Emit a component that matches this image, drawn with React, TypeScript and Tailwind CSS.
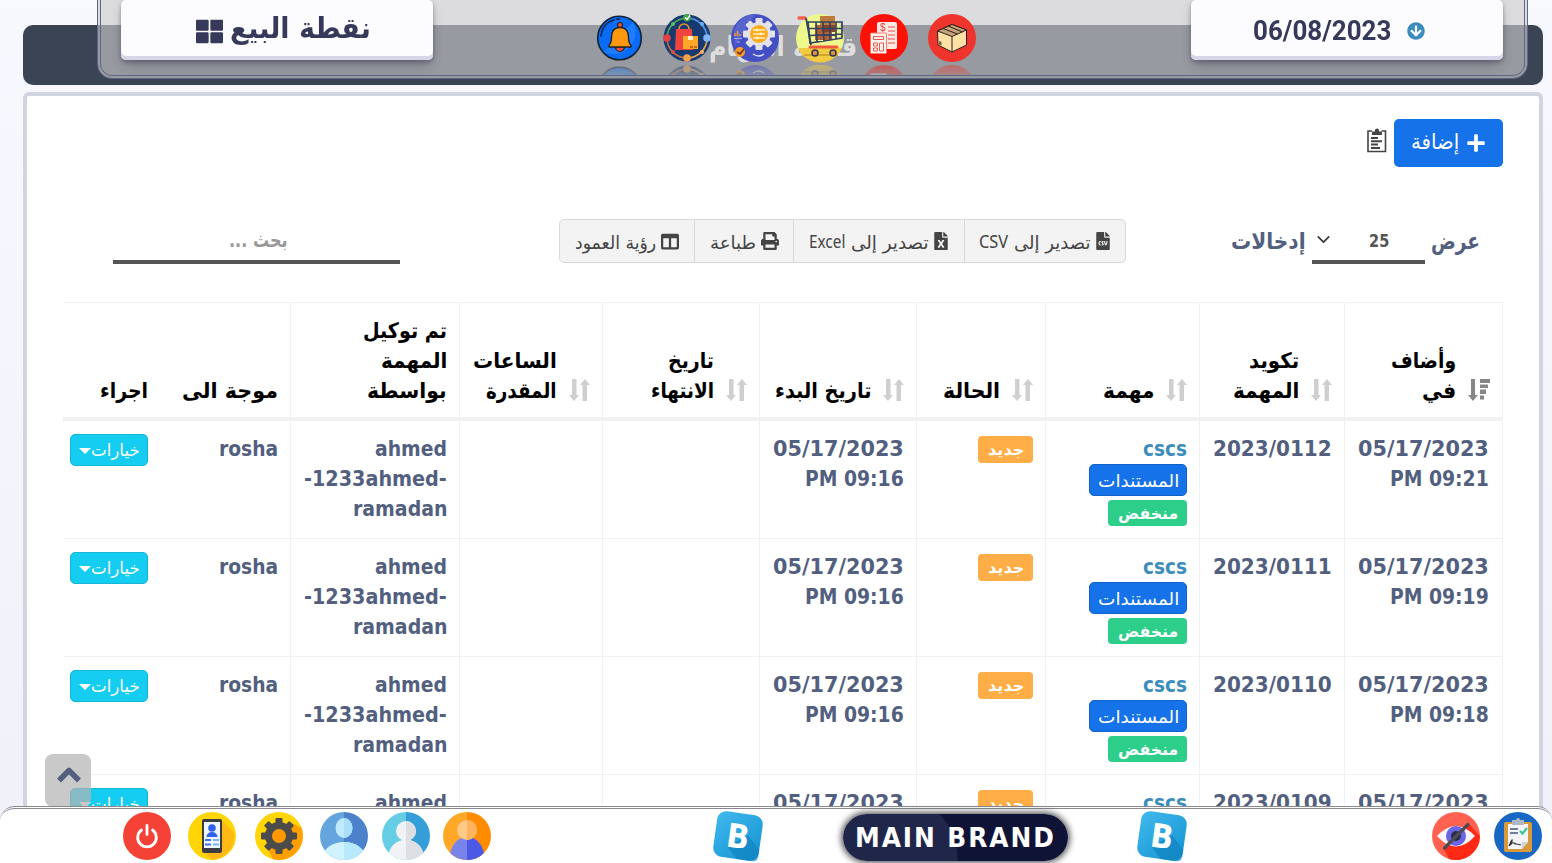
import { useLayoutEffect, useRef, useState, type ReactNode } from "react";
import { FaPlus, FaFileCsv, FaFileExcel, FaPrint, FaColumns, FaThLarge, FaArrowCircleDown } from "react-icons/fa";
import { ChevronDown } from "lucide-react";

/* A single line of text condensed or stretched to a fixed width. */
function Fit({ w, className = "", dir = "rtl", children }: { w: number; className?: string; dir?: "rtl" | "ltr"; children: ReactNode }) {
  const ref = useRef<HTMLSpanElement>(null);
  const [scale, setScale] = useState(1);
  useLayoutEffect(() => {
    if (ref.current) setScale(w / ref.current.offsetWidth);
  }, [w]);
  return (
    <span dir="ltr" className={`inline-flex shrink-0 whitespace-nowrap ${className}`} style={{ width: w }}>
      <span ref={ref} dir={dir} className="block shrink-0 origin-left" style={{ transform: `scaleX(${scale})` }}>
        {children}
      </span>
    </span>
  );
}

function Bell() {
  return (
    <svg viewBox="0 0 48 48" className="size-12">
      <circle cx="24.500" cy="24" r="21.800" fill="#0a6cf5" stroke="#123" strokeWidth="1.600" />
      <path d="M9 38L38 8a22 22 0 0 1-29 30z" fill="#1d7dff" />
      <path d="M6 22C7 13 12 8 19 5.800M22 5h2" stroke="#0b2c66" strokeWidth="1.800" fill="none" strokeLinecap="round" />
      <circle cx="25" cy="11" r="2.500" fill="#f04e45" stroke="#222" strokeWidth="1.200" />
      <path d="M20.500 33a4.500 4.500 0 0 0 9 0z" fill="#f04e45" stroke="#222" strokeWidth="1.200" />
      <path d="M25 13.500c-6 0-8.500 4-8.500 9.500 0 5-.5 6.500-2.500 8.500v1.500h22v-1.500c-2-2-2.500-3.500-2.500-8.500 0-5.500-2.500-9.500-8.500-9.500z" fill="#ff9811" stroke="#222" strokeWidth="1.400" strokeLinejoin="round" />
    </svg>
  );
}

function Shopping() {
  return (
    <svg viewBox="0 0 48 48" className="size-12">
      <circle cx="24" cy="24" r="23.500" fill="#173a70" />
      <g fill="none" strokeWidth="1.600">
        <path d="M10 10A20 20 0 0 1 24 4" stroke="#4caf50" />
        <path d="M24 4a20 20 0 0 1 20 20" stroke="#5b9bea" />
        <path d="M44 24a20 20 0 0 1-20 20" stroke="#f2a54a" />
        <path d="M24 44A20 20 0 0 1 4 24" stroke="#c66b3e" />
        <path d="M4 24a20 20 0 0 1 6-14" stroke="#4caf50" />
        <path d="M16 18v-3a5 5 0 0 1 10 0v3" stroke="#e8952f" />
      </g>
      <path d="M13 15h16l1 21H12z" fill="#f0443e" />
      <path d="M20 22h15v13H20z" fill="#ffa726" />
      <path d="M25 22h5v4h-5z" fill="#fff1c9" />
      <path d="M27 32h3v2h-3zM31 32h3v2h-3z" fill="#c4651d" />
      <circle cx="24" cy="3.800" r="3.800" fill="#43a847" />
      <path d="M22 3.500l2 2 3-4" fill="none" stroke="#fff" strokeWidth="1.400" />
      <circle cx="4" cy="24" r="3.800" fill="#e53f45" />
      <circle cx="44" cy="24" r="3.800" fill="#80b8f7" />
      <circle cx="24" cy="44" r="3.800" fill="#f5a14a" />
      <circle cx="10" cy="10" r="2" fill="#61b865" />
      <circle cx="39" cy="10" r="2" fill="#6eb0f3" />
      <circle cx="10" cy="38" r="2" fill="#e64a45" />
      <circle cx="39" cy="38" r="2" fill="#f6b36c" />
    </svg>
  );
}

function Gear({ cx, cy, r, fill, d }: { cx: number; cy: number; r: number; fill: string; d: number }) {
  return (
    <g fill={fill}>
      <circle cx={cx} cy={cy} r={r} />
      {[0, 45, 90, 135].map((a) => (
        <rect key={a} x={cx - d / 2} y={cy - r - 4} width={d} height={2 * r + 8} rx="1.200" transform={`rotate(${a} ${cx} ${cy})`} />
      ))}
    </g>
  );
}

function Automation() {
  return (
    <svg viewBox="0 0 48 48" className="size-12">
      <circle cx="24" cy="24" r="24" fill="#4450c4" />
      <path d="M3 17A24 24 0 0 1 24 0L4 32z" fill="#5963cd" />
      <Gear cx={28} cy={20} r={12} fill="#e2e3ea" d={7} />
      <circle cx="28" cy="20" r="9" fill="#ffab1f" />
      <path d="M22 16h12M22 20h12M22 24h12" stroke="#fff0bf" strokeWidth="1.300" />
      <circle cx="26" cy="16" r="1.400" fill="#fff0bf" />
      <circle cx="30" cy="20" r="1.400" fill="#fff0bf" />
      <circle cx="26" cy="24" r="1.400" fill="#fff0bf" />
      <path d="M4 22v-3M6.500 22v-5M9 22v-2" stroke="#f29b35" strokeWidth="1.600" />
      <path d="M3 24.500h8M6 28h3" stroke="#a4a8e4" />
      <circle cx="9" cy="38" r="5" fill="#fb9a24" />
      <path d="M6 38l3 2 4-5" stroke="#683622" strokeWidth="1.600" fill="none" />
      <path d="M22 40q6 4 11 0" stroke="#e4e5ff" strokeWidth="1.400" fill="none" />
    </svg>
  );
}

function Cart() {
  return (
    <svg viewBox="0 0 48 48" className="size-12 overflow-visible">
      <circle cx="24" cy="24" r="24" fill="#eef88d" />
      <path d="M2 34a24 24 0 0 0 44 0z" fill="#f2cb40" />
      <path d="M8 41h34" stroke="#d5a62c" strokeWidth="2" />
      <path d="M24 2h15v9H24z" fill="#bd7b3c" />
      <path d="M19 11h17v15H19z" fill="#b85f32" />
      <path d="M26 11h13v7H26z" fill="#8a4226" />
      <path d="M3 4h6" stroke="#f0604d" strokeWidth="3.400" strokeLinecap="round" />
      <path d="M10 4l5 27" stroke="#344363" strokeWidth="1.800" fill="none" />
      <path d="M12 8h34v16l-32 5zM13 14.500h33M14 21.500l32-1.500M20 8l1 20M27 8l1 19M34 8v18M40 8v17" stroke="#344363" strokeWidth="1.700" fill="none" />
      <path d="M14 33h27" stroke="#f0593f" strokeWidth="3" strokeLinecap="round" />
      <circle cx="19" cy="39" r="3" fill="#d89251" stroke="#303647" strokeWidth="1.500" />
      <circle cx="37" cy="39" r="3" fill="#d89251" stroke="#303647" strokeWidth="1.500" />
    </svg>
  );
}

function Invoice() {
  return (
    <svg viewBox="0 0 48 48" className="size-12">
      <circle cx="24" cy="24" r="24" fill="#fb1106" />
      <rect x="17" y="8" width="20" height="27" rx="2" fill="#ffe9e5" />
      <text x="20" y="17" fontSize="10" fontFamily="Liberation Sans" fill="#e13b30">$</text>
      <path d="M28 13h7M28 17h7M28 21h7M28 25h7M28 29h7" stroke="#e94f44" strokeWidth="1" />
      <rect x="10.500" y="19" width="16" height="20.500" rx="1" fill="#fff3f0" stroke="#f77b6e" />
      <path d="M13.500 22.500h10v3h-10zM13.500 29h4v3h-4zM13.500 34h4v3h-4zM19.500 29h4v8h-4z" fill="none" stroke="#e85b50" />
    </svg>
  );
}

function Parcel() {
  return (
    <svg viewBox="0 0 48 48" className="size-12">
      <circle cx="24" cy="24" r="24" fill="#ee342c" />
      <g stroke="#2b211c" strokeWidth="1" strokeLinejoin="round">
        <path d="M9.500 17L24 10.500 38.500 16v15L24 38 10 31z" fill="#ffe0a5" />
        <path d="M9.500 17L24 10.500 38.500 16 24 22.500z" fill="#c8a27a" />
        <path d="M24 22.500V38M15 14.500l14.500 5.500M20 12l14.500 6" fill="none" />
      </g>
      <path d="M11 27l2.500 1v3.500L11 30.500z" fill="#7f5b3a" />
    </svg>
  );
}

function Power() {
  return (
    <svg viewBox="0 0 48 48" className="size-12">
      <circle cx="24" cy="24" r="24" fill="#f44336" />
      <path d="M18.500 18a9.300 9.300 0 1 0 11 0M24 13.500v9" fill="none" stroke="#fff" strokeWidth="2.800" strokeLinecap="round" />
    </svg>
  );
}

function Phone() {
  return (
    <svg viewBox="0 0 48 48" className="size-12">
      <circle cx="24" cy="24" r="24" fill="#ffd505" />
      <path d="M33 7l13 14a24 24 0 0 1-22 27l-9-9z" fill="#ffb915" />
      <rect x="14" y="7" width="20" height="34" rx="2" fill="#3c3d42" />
      <path d="M16 10h16v26H16z" fill="#eef6ff" />
      <circle cx="24" cy="16" r="3.800" fill="#2f62ea" />
      <path d="M18.500 25a5.500 5 0 0 1 11 0z" fill="#2f62ea" />
      <path d="M17 28h6M17 32.500h6" stroke="#3d70ec" strokeWidth="2" />
      <path d="M25 28h6M25 32.500h6" stroke="#79b4f3" strokeWidth="2" />
    </svg>
  );
}

function Settings() {
  return (
    <svg viewBox="0 0 48 48" className="size-12">
      <circle cx="24" cy="24" r="24" fill="#ffd505" />
      <path d="M35 10l11.500 6A24 24 0 0 1 18 47.200L12 36z" fill="#ff9f00" />
      <Gear cx={24} cy={24} r={14} fill="#4b4b4b" d={7} />
      <circle cx="24" cy="24" r="7" fill="#ff9800" />
    </svg>
  );
}

function Person({ left, right, head, headR, body, bodyR, kind, id }: Record<"left" | "right" | "head" | "headR" | "body" | "bodyR" | "id", string> & { kind: number }) {
  const face = kind === 0 ? <ellipse cx="24" cy="16" rx="8.500" ry="10" /> : <circle cx="24" cy={kind === 1 ? 19 : 18} r="10" />;
  const torso =
    kind === 0 ? <ellipse cx="24" cy="47" rx="22" ry="17" /> : kind === 1 ? <path d="M20 24h8v4q14 4 14 20H6q0-16 14-20z" /> : <ellipse cx="24" cy="45" rx="17" ry="20" />;
  return (
    <svg viewBox="0 0 48 48" className="size-12">
      <defs>
        <clipPath id={id}><circle cx="24" cy="24" r="24" /></clipPath>
        <clipPath id={id + "h"}><path d="M24 0h24v48H24z" /></clipPath>
      </defs>
      <g clipPath={`url(#${id})`}>
        <path d="M0 0h24v48H0z" fill={left} />
        <path d="M24 0h24v48H24z" fill={right} />
        <g fill={body}>{torso}</g>
        <g fill={bodyR} clipPath={`url(#${id}h)`}>{torso}</g>
        <g fill={head}>{face}</g>
        <g fill={headR} clipPath={`url(#${id}h)`}>{face}</g>
      </g>
    </svg>
  );
}

function HiddenEye() {
  return (
    <svg viewBox="0 0 48 48" className="size-12">
      <circle cx="24" cy="24" r="24" fill="#ff6250" />
      <path d="M37 12l11 12a24 24 0 0 1-31 23l-5-10z" fill="#ff2a16" />
      <path d="M5 24q19-20 38 0-19 21-38 0z" fill="#f6f5fb" />
      <circle cx="24" cy="24" r="10" fill="#6965e7" />
      <circle cx="24" cy="24" r="5" fill="#292d4a" />
      <path d="M12.500 36L36 12.500" stroke="#4d4c55" strokeWidth="3.400" strokeLinecap="round" />
    </svg>
  );
}

function SignedForm() {
  return (
    <svg viewBox="0 0 48 48" className="size-12">
      <circle cx="24" cy="24" r="24" fill="#1967c4" />
      <rect x="10" y="10" width="28" height="30" rx="2" fill="#d89a3c" />
      <path d="M14 12h20v18l-6 7H14z" fill="#f5f5f7" />
      <path d="M34 30l-6 7v-7z" fill="#cfd2d8" />
      <path d="M18 8h4a2 2 0 0 1 4 0h4v5H18z" fill="#aeb8c6" />
      <path d="M16 17h8M16 21h8" stroke="#435579" strokeWidth="1.500" />
      <path d="M26 19l2.500 2.500L33 16" stroke="#36c99a" strokeWidth="2.200" fill="none" />
      <path d="M15 34q4-9 3-5t-2 4q3-3 4-2t2 1 5 1" stroke="#333" strokeWidth="1.200" fill="none" />
    </svg>
  );
}

function BrandTile() {
  return (
    <svg viewBox="0 0 52 52" className="size-[52px]">
      <defs>
        <linearGradient id="tile" x1="0" y1="0" x2="1" y2="1">
          <stop offset="0" stopColor="#40b9ee" />
          <stop offset="1" stopColor="#1492d0" />
        </linearGradient>
      </defs>
      <g transform="rotate(8 26 26)">
        <rect x="3" y="3" width="46" height="46" rx="9" fill="url(#tile)" />
        <path d="M36 24l13 13v6q0 6-6 6H28L17 38z" fill="#1185c0" opacity=".7" />
        <text x="26" y="38" textAnchor="middle" fontSize="33" fontWeight="700" fontFamily="DejaVu Sans Condensed, DejaVu Sans" fill="#fff">B</text>
      </g>
    </svg>
  );
}

function SortBoth() {
  return (
    <svg viewBox="0 0 21 22" className="h-[22px] w-[21px] shrink-0" fill="#cfcfcf">
      <path d="M3 0h4.500v16H10l-5 6-5-6h3zM13.500 22H18V6h3l-5-6-5 6h2.500z" />
    </svg>
  );
}

function SortDown() {
  return (
    <svg viewBox="0 0 22 22" className="h-[22px] w-[22px] shrink-0" fill="#868686">
      <path d="M3 0h4v16h3l-5 6-5-6h3zM12 0h10v4H12zM12 5.500h8V9h-8zM12 10.500h6V15h-6zM12 16.500h4v4h-4z" />
    </svg>
  );
}

function ClipboardLines() {
  return (
    <svg viewBox="0 0 20 25" className="h-[25px] w-5" fill="none" stroke="#444" strokeWidth="1.600">
      <path d="M5 3H1v20.500h17.500V3h-4" />
      <path d="M5 3.500h3a2 2 0 0 1 4 0h3V7H5z" fill="#444" stroke="none" />
      <circle cx="10" cy="2.500" r="2" fill="#444" stroke="none" />
      <path d="M4 10h7M4 13.300h11M4 16.500h7M4 20h9" strokeWidth="1.900" />
    </svg>
  );
}

const grid = "grid grid-cols-[159px_145px_154px_129px_157px_157px_143px_169px_130px_97px]";
const line = "h-[30px] items-center pt-[3px]";

const headings: { lines: [string, number][]; sort: "down" | "both" | "none" }[] = [
  { lines: [["وأضاف", 65], ["في", 34]], sort: "down" },
  { lines: [["تكويد", 50], ["المهمة", 66]], sort: "both" },
  { lines: [["مهمة", 51]], sort: "both" },
  { lines: [["الحالة", 57]], sort: "both" },
  { lines: [["تاريخ البدء", 96]], sort: "both" },
  { lines: [["تاريخ", 46], ["الانتهاء", 63]], sort: "both" },
  { lines: [["الساعات", 84], ["المقدرة", 71]], sort: "both" },
  { lines: [["تم توكيل", 84], ["المهمة", 66], ["بواسطة", 80]], sort: "none" },
  { lines: [["موجة الى", 96]], sort: "none" },
  { lines: [["اجراء", 48]], sort: "none" },
];

const rows = [
  { code: "2023/0112", added: "PM 09:21" },
  { code: "2023/0111", added: "PM 09:19" },
  { code: "2023/0110", added: "PM 09:18" },
  { code: "2023/0109", added: "PM 09:17" },
];

function Cell({ children, plain = false }: { children?: ReactNode; plain?: boolean }) {
  return <div className={`flex flex-col items-start pt-3 pr-3 ${plain ? "" : "border-l border-[#f1f1f3]"}`}>{children}</div>;
}

function Row({ code, added }: { code: string; added: string }) {
  return (
    <div className={`${grid} h-[118px] border-b border-[#f1f1f3] text-[21.5px] font-bold text-[#525f7f]`}>
      <div className="flex flex-col items-start border-x border-[#f1f1f3] pt-3 pr-[13px]">
        <Fit w={131} dir="ltr" className={line}>05/17/2023</Fit>
        <Fit w={99} dir="ltr" className={line}>{added}</Fit>
      </div>
      <Cell><Fit w={119} dir="ltr" className={line}>{code}</Fit></Cell>
      <Cell>
        <Fit w={44} dir="ltr" className={`${line} text-[#3c8dbc]`}>cscs</Fit>
        <div className="mt-px flex h-8 w-[98px] items-center justify-center rounded-[5px] border border-[#1262c8] bg-[#1572e8] pt-0.5 text-[17.5px] font-normal text-white">
          <Fit w={81}>المستندات</Fit>
        </div>
        <div className="mt-1 flex h-[26px] w-[79px] items-center justify-center rounded bg-[#2dce89] pt-px text-base text-white">
          <Fit w={60}>منخفض</Fit>
        </div>
      </Cell>
      <Cell>
        <div className="mt-[3px] flex h-[27px] w-[55px] items-center justify-center rounded bg-[#ffad46] text-base text-white">
          <Fit w={36}>جديد</Fit>
        </div>
      </Cell>
      <Cell>
        <Fit w={131} dir="ltr" className={line}>05/17/2023</Fit>
        <Fit w={99} dir="ltr" className={line}>PM 09:16</Fit>
      </Cell>
      <Cell />
      <Cell />
      <Cell>
        <Fit w={72} dir="ltr" className={line}>ahmed</Fit>
        <Fit w={143} dir="ltr" className={line}>-1233ahmed-</Fit>
        <Fit w={94} dir="ltr" className={line}>ramadan</Fit>
      </Cell>
      <Cell plain><Fit w={59} dir="ltr" className={line}>rosha</Fit></Cell>
      <Cell plain>
        <div className="mt-px flex h-8 w-[78px] items-center justify-center rounded-[5px] border border-[#17b4d3] bg-[#14cdf0] text-[17px] font-normal text-white">
          <Fit w={49} className="pt-0.5">خيارات</Fit>
          <svg viewBox="0 0 12 6" className="mt-px h-1.5 w-3"><path d="M0 0h12L6 6z" fill="#fff" /></svg>
        </div>
      </Cell>
    </div>
  );
}

export default function App() {
  const reflect = "shrink-0 [-webkit-box-reflect:below_3px_linear-gradient(transparent_60%,rgba(255,255,255,0.45))]";
  const plaque = "flex h-[60px] w-[312px] shrink-0 items-center rounded-[5px] bg-[#fcfcfe] pt-0.5 text-[#36395a] shadow-[0_2px_4px_rgba(45,35,66,0.4),0_7px_13px_-3px_rgba(45,35,66,0.3),inset_0_-4px_0_#d6d6e7]";
  const tool = "flex items-center gap-[5px] border-r border-[#d9d9d9] last:border-r-0";
  return (
    <div dir="rtl" className="h-[863px] w-[1552px] overflow-hidden bg-linear-to-b from-[#f8f9ff] to-[#f0f1f8] font-['DejaVu_Sans_Condensed','DejaVu_Sans',sans-serif]">
      <div className="flex h-full flex-col px-[23px] pt-[25px]" dir="ltr">
        <div className="flex h-[60px] w-[1520px] shrink-0 items-center rounded-[10px] bg-[#3a4454] pl-[686px] text-[27px] font-bold text-white">
          <Fit w={148} className="-mt-4">قائمة المهام</Fit>
        </div>

        <main dir="rtl" className="mt-[7px] h-[900px] w-[1520px] shrink-0 rounded-md border-4 border-[#d1d5e0] bg-white pt-[23px] pr-9 pl-9">
          <div className="flex h-12 items-start gap-[7px]">
            <button className="flex h-12 w-[109px] items-center justify-center gap-[7px] rounded-[5px] bg-[#1572e8] text-[21px] text-white">
              <FaPlus className="size-5" />
              <Fit w={48}>إضافة</Fit>
            </button>
            <div className="pt-[9px]"><ClipboardLines /></div>
          </div>

          <div dir="ltr" className="mt-[52px] flex h-[45px] items-start pl-[50px]">
            <div className="flex h-[45px] w-[287px] items-center justify-center border-b-4 border-[#555] text-xl font-bold text-[#999]">
              <Fit w={59} className="ml-1">بحث ...</Fit>
            </div>
            <div className="ml-[159px] flex h-11 w-[567px] overflow-hidden rounded-[5px] border border-[#d9d9d9] bg-[#f3f3f3] text-[18px] text-[#444]">
              <div className={`${tool} w-[135px] pl-[15px]`}><Fit w={81} className="pt-0.5">رؤية العمود</Fit><FaColumns className="h-[19px] w-[18px]" /></div>
              <div className={`${tool} w-[99px] pl-[15px]`}><Fit w={46} className="pt-0.5">طباعة</Fit><FaPrint className="h-[18px] w-[18px]" /></div>
              <div className={`${tool} w-[171px] pl-[15px]`}>
                <span className="flex items-center gap-1.5"><Fit w={36} dir="ltr" className="font-['Noto_Sans'] text-[17.5px]">Excel</Fit><Fit w={78} className="pt-0.5">تصدير إلى</Fit></span>
                <FaFileExcel className="h-[18px] w-[14px]" />
              </div>
              <div className={`${tool} w-[160px] pl-3.5`}>
                <span className="flex items-center gap-1.5"><Fit w={29} dir="ltr" className="font-['Noto_Sans'] text-[17.5px]">CSV</Fit><Fit w={77} className="pt-0.5">تصدير إلى</Fit></span>
                <FaFileCsv className="h-[18px] w-[14px]" />
              </div>
            </div>
            <div className="ml-[105px] flex h-[45px] text-[23px] font-bold text-[#525f7f]">
              <Fit w={75} className="h-11 items-center">إدخالات</Fit>
              <div className="mx-1.5 flex w-[113px] items-center border-b-4 border-[#555] text-[17px] text-[#555]">
                <ChevronDown className="ml-px size-[21px] text-[#333]" strokeWidth={1.8} />
                <Fit w={20} dir="ltr" className="mt-1 ml-[35px]">25</Fit>
              </div>
              <Fit w={49} className="h-11 items-center">عرض</Fit>
            </div>
          </div>

          <div className="mt-[38px] w-[1440px]">
            <div className={`${grid} h-[119px] border-t border-b-4 border-t-[#f1f1f3] border-b-[#f1f1f1] text-[21.5px] font-bold text-black`}>
              {headings.map((h, i) => (
                <div key={i} className={`flex items-end pb-3 ${i === 0 ? "border-r pr-3" : "pr-3"} ${i < 8 ? "border-l" : ""} border-[#f1f1f3]`}>
                  {h.sort === "down" && <div className="ml-3 pb-1"><SortDown /></div>}
                  {h.sort === "both" && <div className="ml-3 pb-1"><SortBoth /></div>}
                  <div className="flex flex-col items-start">
                    {h.lines.map(([t, w]) => <Fit key={t} w={w} className={line}>{t}</Fit>)}
                  </div>
                </div>
              ))}
            </div>
            {rows.map((r) => <Row key={r.code} {...r} />)}
          </div>
        </main>
      </div>

      <header dir="ltr" className="fixed top-[-20px] left-[97px] flex h-[99px] w-[1431px] items-start overflow-hidden rounded-[15px] border-4 border-double border-[#5d6885] bg-[rgba(203,203,203,0.64)] pt-4 pl-5">
        <div className={`${plaque} gap-[7px] pl-[75px]`}>
          <FaThLarge className="size-[27px]" />
          <Fit w={141} className="-mt-1 text-[29px] font-bold">نقطة البيع</Fit>
        </div>
        <div className="mt-3.5 ml-[162px] flex">
          <div className={reflect}><Bell /></div>
          <div className={`${reflect} ml-5`}><Shopping /></div>
          <div className={`${reflect} ml-5`}><Automation /></div>
          <div className={`${reflect} ml-[17px]`}><Cart /></div>
          <div className={`${reflect} ml-4`}><Invoice /></div>
          <div className={`${reflect} ml-5`}><Parcel /></div>
        </div>
        <div className={`${plaque} ml-[215px] gap-4 pl-[62px]`}>
          <Fit w={138} dir="ltr" className="font-['Roboto'] text-[28px] font-bold">06/08/2023</Fit>
          <FaArrowCircleDown className="size-[18px] text-[#3c8dbc]" />
        </div>
      </header>

      <button className="fixed top-[754px] left-[45px] flex h-[53px] w-[46px] justify-center rounded-lg bg-[rgba(180,180,180,0.72)] pt-3">
        <svg viewBox="0 0 26 17" className="ml-0.5 h-[17px] w-[26px]" fill="none" stroke="#525f7f" strokeWidth="5.500">
          <path d="M3 14.500L13 4.500l10 10" strokeLinecap="butt" strokeLinejoin="round" />
        </svg>
      </button>

      <footer dir="ltr" className="fixed top-[806px] left-0 flex h-[70px] w-[1552px] items-start rounded-t-[15px] border-t-3 border-double border-[#8c898e] bg-white pt-[3px] pl-[123px]">
        <Power />
        <div className="ml-[17px]"><Phone /></div>
        <div className="ml-[19px]"><Settings /></div>
        <div className="ml-[17px]"><Person id="pa" kind={0} left="#63a5dc" right="#4c82cc" head="#bfeaff" headR="#a9dffa" body="#d0f3ff" bodyR="#b7eafd" /></div>
        <div className="ml-3.5"><Person id="pb" kind={1} left="#65cee5" right="#359ed9" head="#f1f2f5" headR="#dedfe4" body="#f1f2f5" bodyR="#dedfe4" /></div>
        <div className="ml-[13px]"><Person id="pc" kind={2} left="#ffa726" right="#ff8c00" head="#ffc988" headR="#ffb45d" body="#7984eb" bodyR="#4b59e4" /></div>
        <div className="-mt-0.5 ml-[221px]"><BrandTile /></div>
        <div className="mt-0.5 ml-[79px] flex h-[47px] w-[225px] items-center justify-center rounded-full bg-[radial-gradient(circle_at_50px_45px,#20264a_0,#20264a_64px,#0f1437_65px)] pt-0.5 text-[26px] font-bold text-white shadow-[0_0_6px_2px_rgba(0,0,0,0.65)]">
          <Fit w={201} dir="ltr" className="font-['DejaVu_Sans'] tracking-[2px]">MAIN BRAND</Fit>
        </div>
        <div className="-mt-0.5 ml-[68px]"><BrandTile /></div>
        <div className="ml-[244px]"><HiddenEye /></div>
        <div className="ml-3.5"><SignedForm /></div>
      </footer>
    </div>
  );
}
